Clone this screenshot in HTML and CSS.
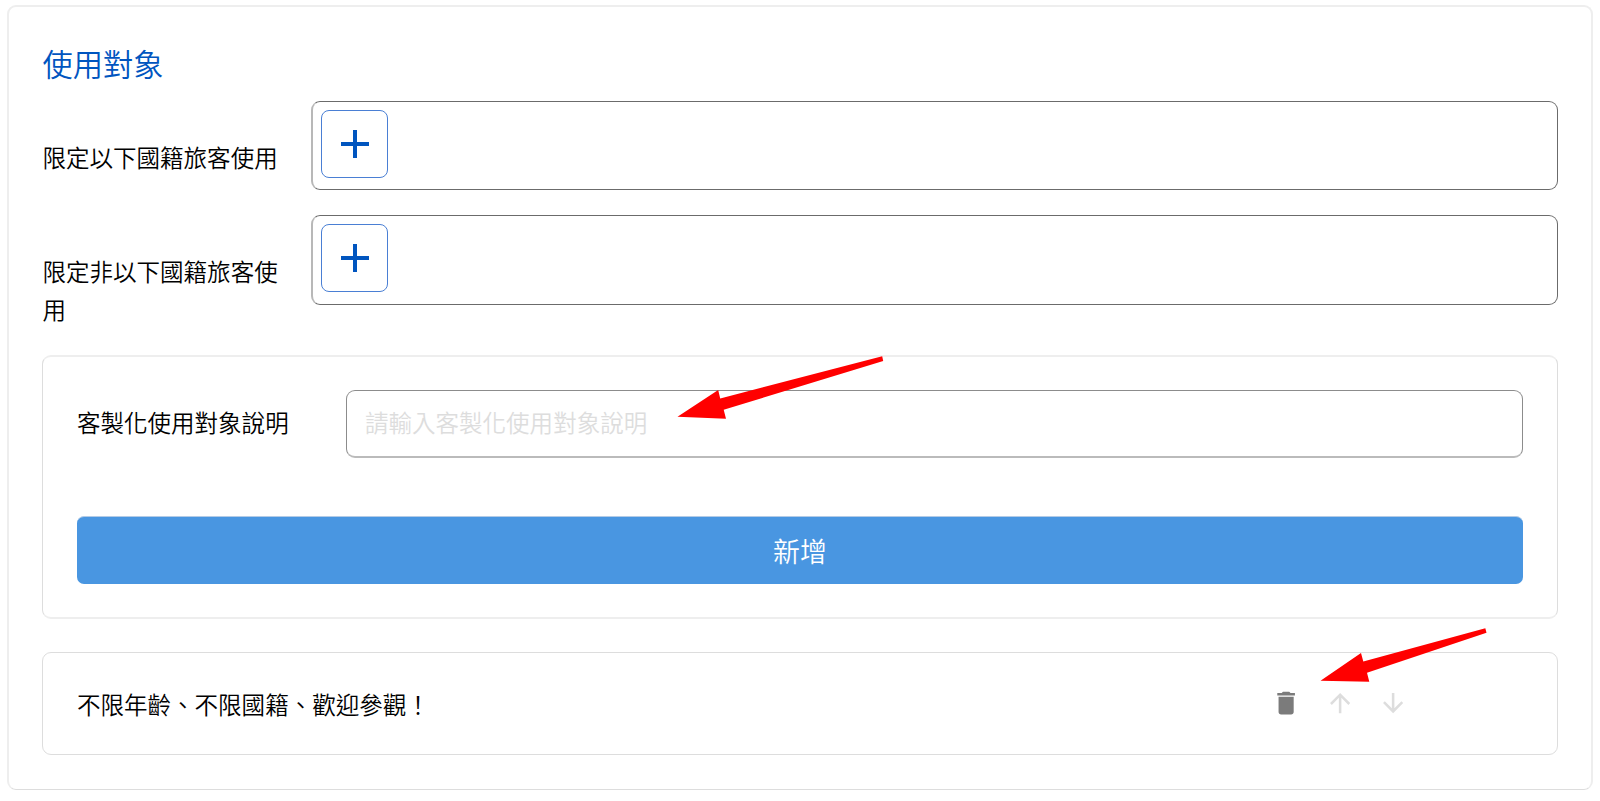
FILE: index.html
```html
<!DOCTYPE html>
<html lang="zh-TW">
    <head>
        <meta charset="utf-8">
        <title>使用對象</title>
        <link rel="stylesheet" href="styles.css">
    </head>
    <body>
        <div class="card">
            <h3 class="title">使用對象</h3>

            <div class="row">
                <div class="label">限定以下國籍旅客使用</div>
                <div class="tags">
                    <button class="plus">
                        <svg width="28" height="28" viewBox="0 0 28 28"><path d="M12 0h4v12h12v4H16v12h-4V16H0v-4h12z"/></svg>
                    </button>
                </div>
            </div>

            <div class="row row-second">
                <div class="label">限定非以下國籍旅客使用</div>
                <div class="tags">
                    <button class="plus">
                        <svg width="28" height="28" viewBox="0 0 28 28"><path d="M12 0h4v12h12v4H16v12h-4V16H0v-4h12z"/></svg>
                    </button>
                </div>
            </div>

            <div class="group">
                <div class="group-row">
                    <label class="group-label" for="custom-target">客製化使用對象說明</label>
                    <input class="input" id="custom-target" type="text" placeholder="請輸入客製化使用對象說明">
                </div>
                <button class="add">新增</button>
            </div>

            <div class="item">
                <div class="item-text">不限年齡、不限國籍、歡迎參觀！</div>
                <div class="actions">
                    <svg class="icon icon-delete" viewBox="0 0 24 24"><path d="M6 19c0 1.1.9 2 2 2h8c1.1 0 2-.9 2-2V7H6v12zM19 4h-3.5l-1-1h-5l-1 1H5v2h14V4z"/></svg>
                    <svg class="icon" viewBox="0 0 24 24"><path d="M4 12l1.41 1.41L11 7.83V20h2V7.83l5.58 5.59L20 12l-8-8-8 8z"/></svg>
                    <svg class="icon" viewBox="0 0 24 24"><path d="M20 12l-1.41-1.41L13 16.17V4h-2v12.17l-5.58-5.59L4 12l8 8 8-8z"/></svg>
                </div>
            </div>
        </div>

        <!-- red pointers over the form -->
        <svg class="pointers" width="1600" height="801" viewBox="0 0 1600 801">
            <polygon points="677.5,416.7 718.2,390 720.2,398.5 882.2,356.3 883.2,361 723.7,409.8 726,418.8"/>
            <polygon points="1320.5,680.8 1361,653 1363.3,661.5 1485.3,628.2 1486.5,632.7 1367,672.7 1369.3,681.8"/>
        </svg>
    </body>
</html>
```

FILE: styles.css
```css
*{
    box-sizing: border-box;
}

body{
    margin: 0;
    padding: 5px 7px 0;
    background: #fff;
    color: #000;
    font-size: 23.52px;
    line-height: 1.6;
    font-weight: 350;
    font-family: "Noto Sans CJK TC", sans-serif;
    overflow: hidden;
}

button, input{
    font-family: inherit;
    font-weight: inherit;
    margin: 0;
}

.card{
    height: 785px;
    padding: 32px 33px 0;
    border: 2px solid #eee;
    border-bottom: 1px solid #ddd;
    border-radius: 9px;
}

.title{
    margin: 0 0 14px;
    padding-left: 0.5px;
    font-size: 30.24px;
    line-height: 48px;
    font-weight: inherit;
    color: #0055bf;
}

.row{
    display: flex;
    height: 114px;
}

.row-second{
    height: 140px;
}

.label{
    width: 269px;
    padding: 38px 30px 0 0.5px;
}

.tags{
    flex: 1;
    height: 89px;
    padding: 8px;
    border: 1px solid #6b6b6b;
    border-left: 2px solid #b8b8b8;
    border-radius: 9px;
}

.row-second .tags{
    height: 90px;
}

.plus{
    display: flex;
    align-items: center;
    justify-content: center;
    width: 67px;
    height: 68px;
    padding: 0;
    background: #fff;
    border: 1px solid #4a7fd4;
    border-radius: 8px;
}

.plus svg{
    display: block;
    fill: #0055bf;
}

.group{
    height: 264px;
    padding: 33px 34px 0;
    border: 2px solid #eee;
    border-left: 1px solid #ddd;
    border-right: 1px solid #ddd;
    border-radius: 9px;
}

.group-row{
    display: flex;
    align-items: center;
    margin-bottom: 58px;
}

.group-label{
    width: 269px;
    padding-bottom: 3px;
}

.input{
    flex: 1;
    height: 68px;
    padding: 0 18px 4px;
    font-size: 23.52px;
    background: #fff;
    border: 1px solid #8c8c8c;
    border-bottom: 2px solid #bbb;
    border-radius: 9px;
}

.input::placeholder{
    color: #ddd;
}

.add{
    display: block;
    width: 100%;
    height: 68px;
    padding: 0;
    font-size: 26.88px;
    color: #fff;
    background: #4996e1;
    border: 0;
    border-top: 1px solid #b3cbe6;
    border-radius: 7px;
}

.item{
    display: flex;
    align-items: center;
    justify-content: space-between;
    height: 103px;
    margin-top: 33px;
    padding: 0 148.5px 0 34px;
    border: 1px solid #ddd;
    border-radius: 9px;
}

.item-text{
    padding-top: 2px;
}

.actions{
    display: flex;
    gap: 23.5px;
}

.icon{
    width: 30.24px;
    height: 30.24px;
    fill: #ddd;
}

.icon-delete{
    fill: #7b7b7b;
}

.pointers{
    position: absolute;
    top: 0;
    left: 0;
    fill: #f00;
    pointer-events: none;
}
```
